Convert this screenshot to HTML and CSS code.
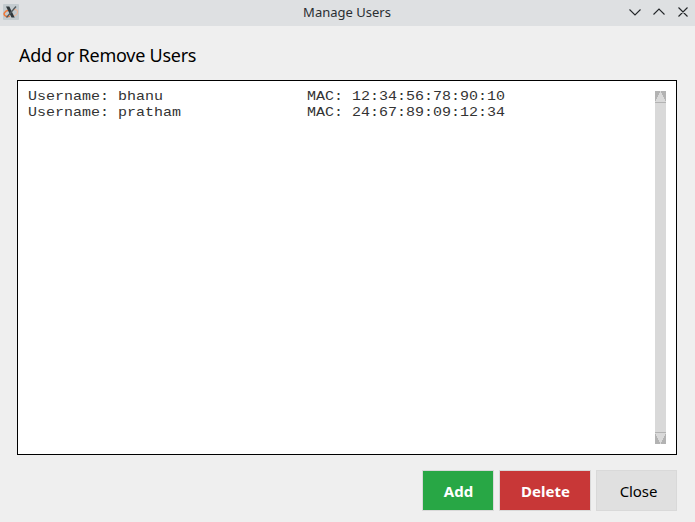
FILE: index.html
```html
<!DOCTYPE html>
<html lang="en">
<head>
<meta charset="utf-8">
<title>Manage Users</title>
<link rel="stylesheet" href="styles.css">
</head>
<body>
<div class="window">
  <header class="titlebar">
    <svg class="app-icon" width="16" height="16" viewBox="0 0 16 16">
      <rect width="16" height="16" rx="1" fill="#c3cbcf"/>
      <path d="M10 5.500c3-.3 5 .8 4.500 3-.4 2-2.500 3.300-5 3.700" fill="none" stroke="#ecb79b" stroke-width="1.2"/>
      <path d="M5.500 6.200C1.500 7 .3 10 1.800 11.500c1 1 3 1.200 5 .7" fill="none" stroke="#f07a3c" stroke-width="1.6"/>
      <path d="M3 2.500h3.300l5.400 11H8.500z" fill="#30383c"/>
      <path d="M13 2.500 3.500 13.500" fill="none" stroke="#50585c" stroke-width="1.3"/>
    </svg>
    <h1 class="title">Manage Users</h1>
    <svg class="controls" width="60" height="12" viewBox="0 0 60 12">
      <path d="M.5 3.500 6 9l5.500-5.500M24.500 8.500 30 3l5.500 5.500M49.500 1.500l9 9M58.500 1.500l-9 9"/>
    </svg>
  </header>
  <main class="content">
    <h2 class="heading">Add or Remove Users</h2>
    <section class="list">
      <pre class="users">Username: bhanu                MAC: 12:34:56:78:90:10
Username: pratham              MAC: 24:67:89:09:12:34</pre>
      <div class="scrollbar">
        <svg class="arrow" width="11" height="12" viewBox="0 0 11 12" shape-rendering="crispEdges"><path class="trough" d="M0 0h11v12H0z"/><path class="face" d="M5.500 0 11 11H0z"/><path class="edge" d="M0 11h11v1H0z"/></svg>
        <svg class="arrow" width="11" height="12" viewBox="0 0 11 12" shape-rendering="crispEdges"><path class="trough" d="M0 0h11v12H0z"/><path class="face" d="M0 1h11L5.500 12z"/><path class="edge" d="M0 0h11v1H0z"/></svg>
      </div>
    </section>
    <footer class="actions">
      <button class="button add">Add</button>
      <button class="button delete">Delete</button>
      <button class="button close">Close</button>
    </footer>
  </main>
</div>
</body>
</html>
```
FILE: styles.css
```css
* { box-sizing: border-box; }
body { margin: 0; background: #efefef; font-family: "Noto Sans", sans-serif; color: #000; }
.window { height: 522px; display: flex; flex-direction: column; overflow: hidden; }
.titlebar {
  height: 26px;
  flex: none;
  display: grid;
  grid-template-columns: 60px 1fr 60px;
  align-items: center;
  padding: 0 6px 2px 3px;
  background: #dee0e2;
}
.app-icon, .controls, .arrow { display: block; }
.title { margin: 0; font-size: 13px; line-height: 18px; font-weight: 400; text-align: center; color: #2a2e32; padding: 0 0 1px 2px; }
.controls { fill: none; stroke: #232629; stroke-width: 1.1; }
.content { flex: 1; display: flex; flex-direction: column; padding: 17px 18px 11px 17px; }
.heading { margin: 0 0 12px 2px; font-size: 18px; line-height: 25px; font-weight: 400; letter-spacing: -0.25px; }
.list {
  height: 375px;
  display: flex;
  justify-content: space-between;
  padding: 10px;
  border: 1px solid #000;
  background: #fff;
}
.users {
  align-self: flex-start;
  margin: -2px 0 0;
  font: 15px/17.78px "Liberation Mono", monospace;
  color: #333;
  transform: scaleY(0.9);
  transform-origin: 0 0;
}
.scrollbar { width: 11px; display: flex; flex-direction: column; justify-content: space-between; background: #d9d9d9; }
.trough { fill: #b3b3b3; }
.face { fill: #d9d9d9; }
.edge { fill: #b3b3b3; }
.actions { display: flex; justify-content: flex-end; gap: 5px; margin-top: 15px; }
.button {
  height: 41px;
  border: 1px solid #d9d9d9;
  padding: 0 0 0 1px;
  font: 700 15px/20px "Noto Sans", sans-serif;
  color: #fff;
}
.add { width: 72px; background: #28a745; }
.delete { width: 92px; background: #c83737; }
.close { width: 81px; padding-left: 4px; background: #e0e0e0; color: #000; font-weight: 400; letter-spacing: -0.1px; }
```
